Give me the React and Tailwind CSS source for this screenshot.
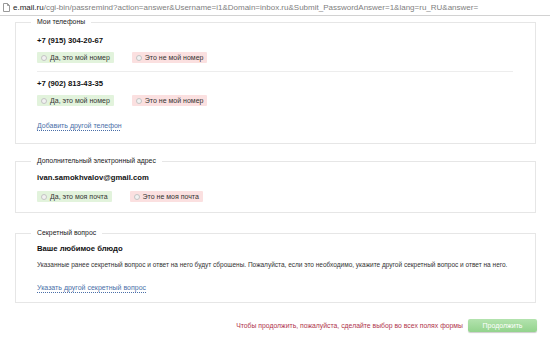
import React from 'react';

const Choice = ({ label, tone, className = '' }) => {
    const bg = tone === 'yes' ? 'bg-[#e2f3dc]' : 'bg-[#fbe0e0]';
    return (
        <div className={`flex items-center h-[11px] pl-[4px] pr-[4px] gap-[3px] rounded-[1px] ${bg} ${className}`}>
            <span className="w-[6px] h-[6px] rounded-full border border-[#c4c4c4] bg-[#f2f2f2]"></span>
            <span className="text-[7px] leading-[11px] text-[#333]">{label}</span>
        </div>
    );
};

const Panel = ({ title, children, className = '' }) => (
    <fieldset className={`border border-[#e6e6e6] px-[21px] ${className}`}>
        <legend className="ml-[-6px] px-[6px] text-[6.9px] leading-[8px] text-[#1a1a1a]">{title}</legend>
        {children}
    </fieldset>
);

const App = () => {
    return (
        <div className="w-[550px] h-[338px] bg-white overflow-hidden" style={{ fontFamily: '"Liberation Sans", Arial, sans-serif' }}>
            <div className="h-[16px] flex items-center pl-[3px] border-b border-[#d2d2d2] bg-white">
                <svg width="7" height="9" viewBox="0 0 7 9" className="mr-[3px]">
                    <path d="M0.5 0.5 H4.5 L6.5 2.5 V8.5 H0.5 Z" fill="#fff" stroke="#9a9a9a" strokeWidth="1" />
                    <path d="M4.5 0.5 V2.5 H6.5" fill="none" stroke="#9a9a9a" strokeWidth="1" />
                </svg>
                <span className="text-[8px] leading-[10px] whitespace-nowrap">
                    <span className="text-[#222]">e.mail.ru</span>
                    <span className="text-[#808080]">/cgi-bin/passremind?action=answer&amp;Username=i1&amp;Domain=inbox.ru&amp;Submit_PasswordAnswer=1&amp;lang=ru_RU&amp;answer=</span>
                </span>
            </div>

            <div className="ml-[15px] w-[521px] pt-[2px]">
                <Panel title="Мои телефоны" className="pb-[12px]">
                    <div className="pt-[10px] text-[7.7px] leading-[10px] font-bold text-[#111]">+7 (915) 304-20-67</div>
                    <div className="flex mt-[6px]">
                        <Choice tone="yes" label="Да, это мой номер" />
                        <Choice tone="no" label="Это не мой номер" className="ml-[18px]" />
                    </div>
                    <div className="mt-[8px] h-px bg-[#ededed] mr-[1px]"></div>
                    <div className="mt-[7px] text-[7.7px] leading-[10px] font-bold text-[#111]">+7 (902) 813-43-35</div>
                    <div className="flex mt-[6px]">
                        <Choice tone="yes" label="Да, это мой номер" />
                        <Choice tone="no" label="Это не мой номер" className="ml-[18px]" />
                    </div>
                    <div className="mt-[15px] text-[7px] leading-[10px]">
                        <a className="text-[#4a6fa8] underline decoration-dotted underline-offset-2">Добавить другой телефон</a>
                    </div>
                </Panel>

                <Panel title="Дополнительный электронный адрес" className="mt-[13px] pb-[10px]">
                    <div className="pt-[8px] text-[7.7px] leading-[10px] font-bold text-[#111]">ivan.samokhvalov@gmail.com</div>
                    <div className="flex mt-[8px]">
                        <Choice tone="yes" label="Да, это моя почта" />
                        <Choice tone="no" label="Это не моя почта" className="ml-[18px]" />
                    </div>
                </Panel>

                <Panel title="Секретный вопрос" className="mt-[16px] pb-[9px]">
                    <div className="pt-[7px] text-[7.7px] leading-[10px] font-bold text-[#111]">Ваше любимое блюдо</div>
                    <div className="mt-[6px] text-[6.5px] leading-[10px] text-[#333] whitespace-nowrap">
                        Указанные ранее секретный вопрос и ответ на него будут сброшены. Пожалуйста, если это необходимо, укажите другой секретный вопрос и ответ на него.
                    </div>
                    <div className="mt-[13px] text-[7px] leading-[10px]">
                        <a className="text-[#4a6fa8] underline decoration-dotted underline-offset-2">Указать другой секретный вопрос</a>
                    </div>
                </Panel>

                <div className="flex items-center justify-end mt-[16px] mr-[-1px]">
                    <span className="text-[6.85px] leading-[10px] text-[#b0344c]">Чтобы продолжить, пожалуйста, сделайте выбор во всех полях формы</span>
                    <div className="ml-[5px] w-[69px] h-[13px] rounded-[2px] bg-gradient-to-b from-[#b3e3ae] to-[#93d38d] shadow-[0_1px_1px_rgba(0,0,0,0.2)] flex items-center justify-center">
                        <span className="text-[7px] leading-[10px] text-white">Продолжить</span>
                    </div>
                </div>
            </div>
        </div>
    );
};

export default App;
